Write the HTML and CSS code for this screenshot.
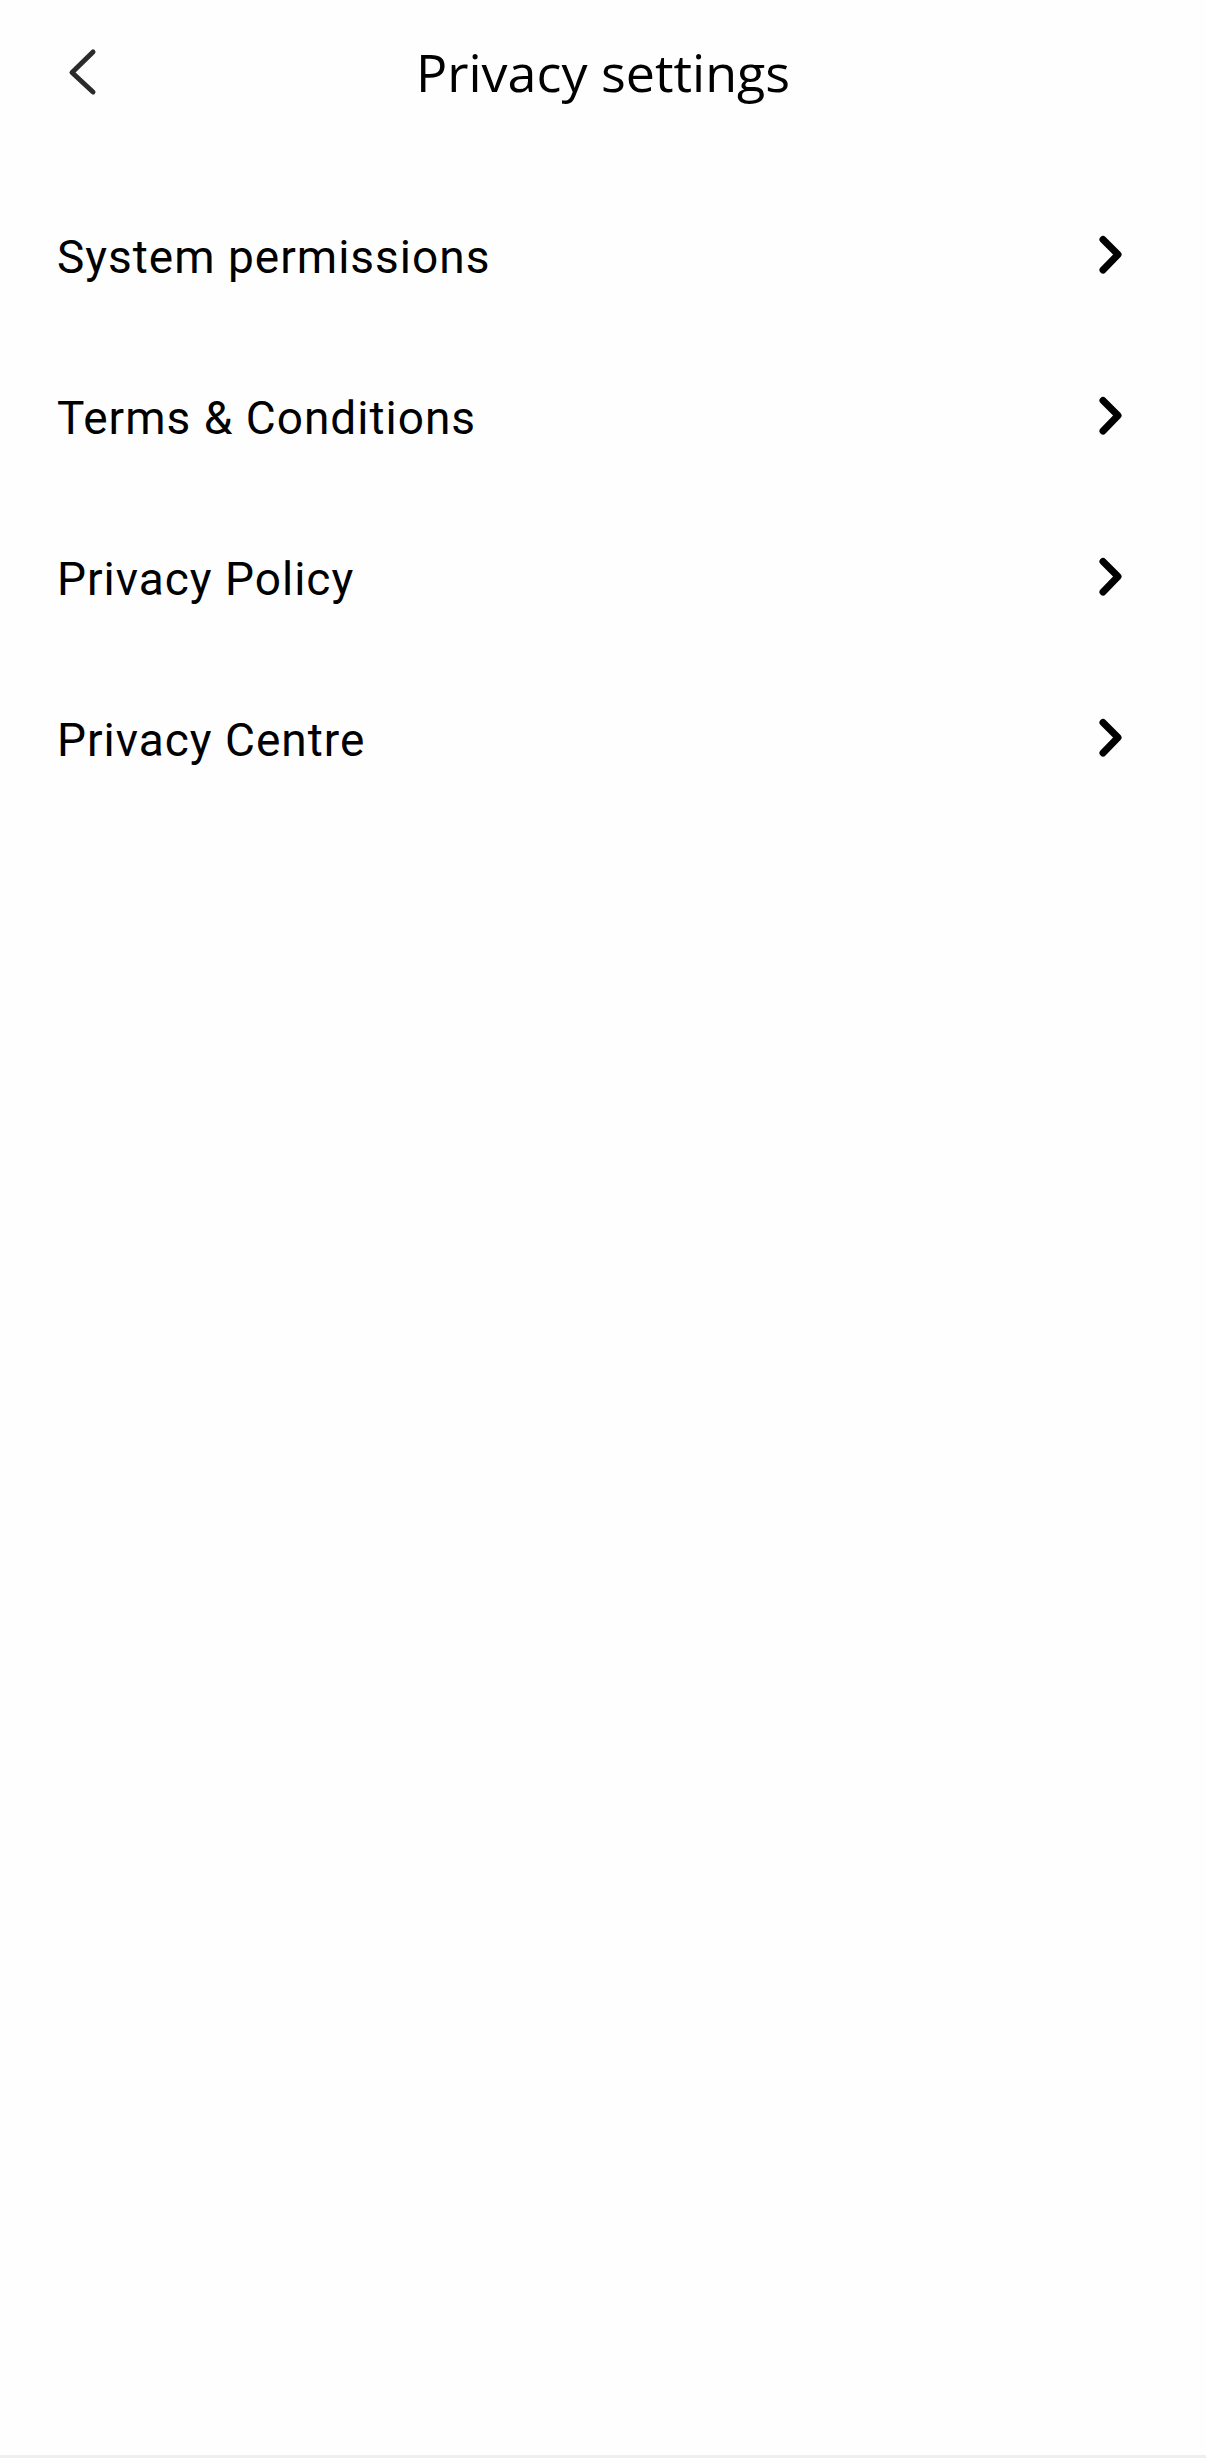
FILE: index.html
```html
<!DOCTYPE html>
<html lang="en">
<head>
<meta charset="utf-8">
<title>Privacy settings</title>
<link rel="stylesheet" href="styles.css">
</head>
<body>
<div class="page">
  <header class="header">
    <div class="header-left">
      <svg class="back" viewBox="0 0 40 60" width="40" height="60" aria-hidden="true">
        <polyline points="31,9 10,29.5 31,49" fill="none" stroke="#2b2b2b" stroke-width="5" stroke-linecap="round" stroke-linejoin="round"/>
      </svg>
    </div>
    <h1 class="title">Privacy settings</h1>
    <div class="header-right"></div>
  </header>
  <ul class="menu">
    <li class="row"><span class="label">System permissions</span><svg class="chev" viewBox="0 0 32 48" width="32" height="48" aria-hidden="true"><polyline points="7,6.5 22,21.5 7,37" fill="none" stroke="#000" stroke-width="7" stroke-linecap="round" stroke-linejoin="round"/></svg></li>
    <li class="row"><span class="label">Terms &amp; Conditions</span><svg class="chev" viewBox="0 0 32 48" width="32" height="48" aria-hidden="true"><polyline points="7,6.5 22,21.5 7,37" fill="none" stroke="#000" stroke-width="7" stroke-linecap="round" stroke-linejoin="round"/></svg></li>
    <li class="row"><span class="label">Privacy Policy</span><svg class="chev" viewBox="0 0 32 48" width="32" height="48" aria-hidden="true"><polyline points="7,6.5 22,21.5 7,37" fill="none" stroke="#000" stroke-width="7" stroke-linecap="round" stroke-linejoin="round"/></svg></li>
    <li class="row"><span class="label">Privacy Centre</span><svg class="chev" viewBox="0 0 32 48" width="32" height="48" aria-hidden="true"><polyline points="7,6.5 22,21.5 7,37" fill="none" stroke="#000" stroke-width="7" stroke-linecap="round" stroke-linejoin="round"/></svg></li>
  </ul>
  <div class="spacer"></div>
  <div class="bottom-line"></div>
</div>
</body>
</html>
```

FILE: styles.css
```css
* { box-sizing: border-box; }
html, body { margin: 0; padding: 0; background: #fefefe; }
.page {
  width: 1206px;
  min-height: 2458px;
  display: flex;
  flex-direction: column;
  background: #fefefe;
}
.header {
  height: 146px;
  padding-bottom: 3px;
  display: grid;
  grid-template-columns: 1fr auto 1fr;
  align-items: center;
}
.header-left {
  display: flex;
  align-items: center;
  padding-left: 62px;
  padding-top: 3px;
}
.back { display: block; }
.title {
  margin: 0;
  font-family: "Open Sans", "Noto Sans", sans-serif;
  font-weight: 400;
  font-size: 52px;
  line-height: 1;
  color: #000;
}
.menu {
  list-style: none;
  margin: 0;
  padding: 30px 0 0 0;
}
.row {
  height: 161px;
  display: flex;
  align-items: center;
  justify-content: space-between;
  padding: 0 78px 0 57px;
}
.label {
  font-family: Roboto, "Liberation Sans", Arial, sans-serif;
  font-size: 46px;
  line-height: 1;
  letter-spacing: 1px;
  color: #000;
}
.chev { display: block; }
.spacer { flex: 1; }
.bottom-line {
  height: 3px;
  background: #efefef;
}
```
